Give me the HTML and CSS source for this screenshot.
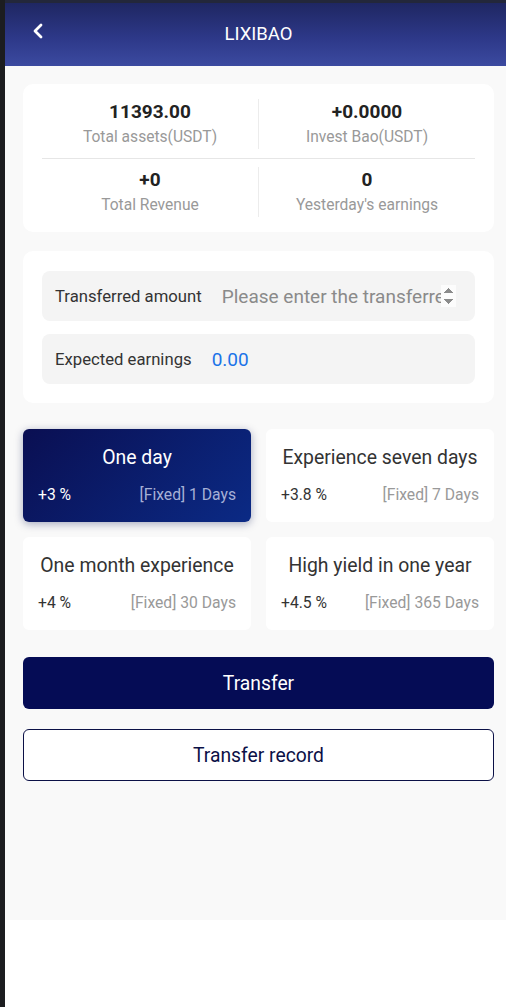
FILE: index.html
```html
<!DOCTYPE html>
<html lang="en">
<head>
    <meta charset="UTF-8">
    <meta name="viewport" content="width=device-width, initial-scale=1.0">
    <title>LIXIBAO</title>
    <link rel="stylesheet" href="styles.css">
</head>
<body>
    <div class="side-strip"></div>

    <div class="app">
        <div class="topbar"></div>
        <div class="header">
            <a class="back" href="#">
                <svg width="12" height="16" viewBox="0 0 12 16">
                    <path d="M9 2 L3 8 L9 14" fill="none" stroke="#fff" stroke-width="2.8" stroke-linecap="round" stroke-linejoin="round"/>
                </svg>
            </a>
            <div class="title">LIXIBAO</div>
        </div>

        <div class="main">
            <div class="card stats">
                <div class="stats-row">
                    <div class="stat">
                        <div class="stat-value">11393.00</div>
                        <div class="stat-label">Total assets(USDT)</div>
                    </div>
                    <div class="stat">
                        <div class="stat-value">+0.0000</div>
                        <div class="stat-label">Invest Bao(USDT)</div>
                    </div>
                </div>
                <div class="stats-row bottom">
                    <div class="stat">
                        <div class="stat-value">+0</div>
                        <div class="stat-label">Total Revenue</div>
                    </div>
                    <div class="stat">
                        <div class="stat-value">0</div>
                        <div class="stat-label">Yesterday's earnings</div>
                    </div>
                </div>
            </div>

            <div class="card form">
                <div class="form-row">
                    <span class="form-label">Transferred amount</span>
                    <input type="number" class="amount" placeholder="Please enter the transferred amount">
                </div>
                <div class="form-row">
                    <span class="form-label">Expected earnings</span>
                    <span class="earn">0.00</span>
                </div>
            </div>

            <div class="plans">
                <div class="plan active">
                    <div class="plan-name">One day</div>
                    <div class="plan-info">
                        <span class="rate">+3 %</span>
                        <span class="term">[Fixed] 1 Days</span>
                    </div>
                </div>
                <div class="plan">
                    <div class="plan-name">Experience seven days</div>
                    <div class="plan-info">
                        <span class="rate">+3.8 %</span>
                        <span class="term">[Fixed] 7 Days</span>
                    </div>
                </div>
                <div class="plan">
                    <div class="plan-name">One month experience</div>
                    <div class="plan-info">
                        <span class="rate">+4 %</span>
                        <span class="term">[Fixed] 30 Days</span>
                    </div>
                </div>
                <div class="plan">
                    <div class="plan-name">High yield in one year</div>
                    <div class="plan-info">
                        <span class="rate">+4.5 %</span>
                        <span class="term">[Fixed] 365 Days</span>
                    </div>
                </div>
            </div>

            <button class="btn btn-primary">Transfer</button>
            <button class="btn btn-outline">Transfer record</button>
        </div>
    </div>
</body>
</html>
```

FILE: styles.css
```css
* {
    margin: 0;
    padding: 0;
    box-sizing: border-box;
    font-family: Roboto, 'Noto Sans', sans-serif;
}

body {
    background-color: #ffffff;
    color: #333333;
    display: flex;
    overflow: hidden;
    height: 1007px;
}

.side-strip {
    width: 5px;
    flex-shrink: 0;
    background-color: #1c1d20;
}

.app {
    width: 507px;
    flex-shrink: 0;
}

.topbar {
    height: 3px;
    background-color: #23273a;
}

.header {
    height: 63px;
    background: linear-gradient(180deg, #1f2762 0%, #2d3888 55%, #3b4aa0 100%);
    display: flex;
    align-items: center;
    justify-content: center;
    position: relative;
}

.back {
    position: absolute;
    left: 27px;
    top: 20px;
    display: flex;
}

.title {
    color: #ffffff;
    font-size: 18.5px;
    margin-top: -2px;
}

.main {
    height: 854px;
    background-color: #f9f9f9;
    padding: 18px 18px 0;
}

.card {
    background-color: #ffffff;
    border-radius: 10px;
}

.stats {
    padding: 13px 19px 15px;
}

.stats-row {
    display: flex;
    padding: 2px 0 9px;
}

.stats-row.bottom {
    border-top: 1px solid #e6e6e6;
    padding: 8px 0 0;
}

.stat {
    flex: 1;
    text-align: center;
}

.stat:first-child {
    border-right: 1px solid #ececec;
}

.stat-value {
    font-size: 19px;
    font-weight: bold;
    color: #222222;
    line-height: 26px;
}

.stat-label {
    font-size: 15.6px;
    color: #999999;
    line-height: 24px;
}

.form {
    margin-top: 19px;
    padding: 20px 19px 19px;
    display: flex;
    flex-direction: column;
    gap: 13px;
}

.form-row {
    height: 50px;
    background-color: #f4f4f4;
    border-radius: 8px;
    display: flex;
    align-items: center;
    padding: 0 13px;
}

.form-label {
    font-size: 16.7px;
    color: #333333;
    white-space: nowrap;
}

.amount {
    margin-left: 20px;
    width: 234px;
    border: none;
    background: transparent;
    font-size: 19px;
    color: #333333;
    outline: none;
}

.amount::placeholder {
    color: #8a8a8a;
}

.amount::-webkit-inner-spin-button {
    opacity: 1;
}

.earn {
    margin-left: 20px;
    font-size: 19px;
    color: #1a73e8;
}

.plans {
    margin-top: 26px;
    display: grid;
    grid-template-columns: 1fr 1fr;
    gap: 15px;
}

.plan {
    height: 93px;
    background-color: #ffffff;
    border-radius: 6px;
    padding: 15px 15px 0;
}

.plan.active {
    background: linear-gradient(135deg, #0a0f52 0%, #0b2a85 100%);
    box-shadow: 0 2px 8px rgba(10, 20, 80, 0.35);
}

.plan-name {
    text-align: center;
    font-size: 19.4px;
    color: #333333;
    line-height: 28px;
}

.plan-info {
    margin-top: 12px;
    display: flex;
    justify-content: space-between;
    font-size: 15.7px;
    line-height: 22px;
}

.rate {
    color: #333333;
}

.term {
    color: #999999;
}

.plan.active .plan-name,
.plan.active .rate {
    color: #ffffff;
}

.plan.active .term {
    color: #a6b0d6;
}

.btn {
    display: block;
    width: 100%;
    height: 52px;
    border-radius: 6px;
    font-size: 19.3px;
    cursor: pointer;
}

.btn-primary {
    margin-top: 27px;
    background-color: #050c55;
    color: #ffffff;
    border: none;
}

.btn-outline {
    margin-top: 20px;
    background-color: #ffffff;
    color: #0b1046;
    border: 1px solid #0b1046;
}
```
